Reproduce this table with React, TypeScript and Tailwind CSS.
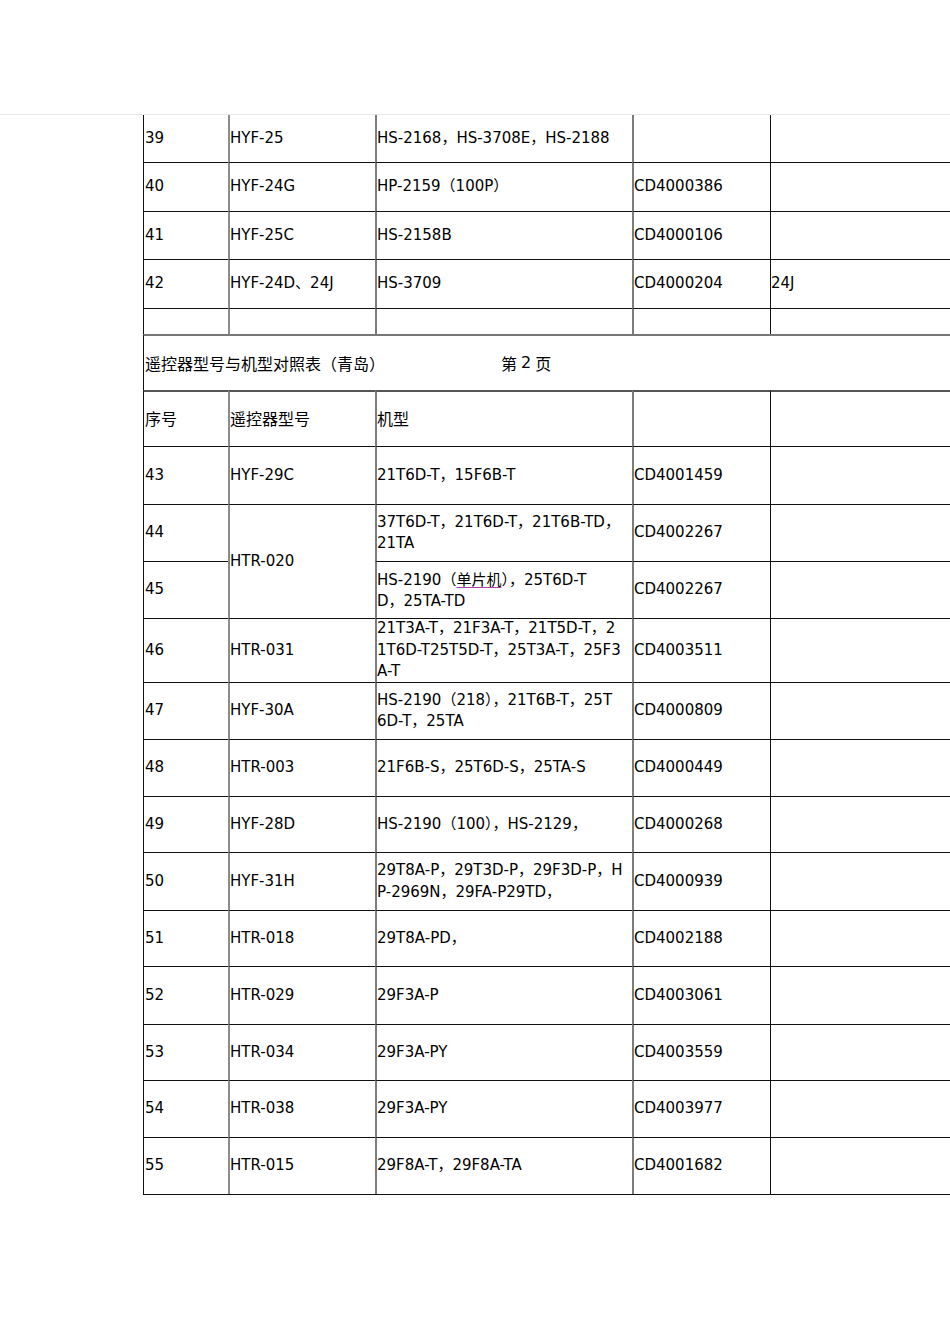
import React from "react";

const font = "font-['DejaVu_Sans','Noto_Sans_CJK_SC',sans-serif]";
const cjk = "font-['Noto_Sans_CJK_SC',sans-serif]";

// left border per column, matching the scanned sheet's grid lines
const colBorder = [
  "border-l border-l-[#111] pl-px",
  "border-l-2 border-l-[#8c8c8c]",
  "border-l-2 border-l-[#7d7d7d]",
  "border-l-2 border-l-[#7d7d7d]",
  "border-l border-l-[#111]",
];

function Cell({
  col,
  children,
  className = "",
}: {
  col: number;
  children?: React.ReactNode;
  className?: string;
}) {
  return (
    <div
      className={`flex items-center whitespace-nowrap border-t border-t-[#111] text-[15px] leading-[21.5px] ${colBorder[col]} ${className}`}
    >
      {children}
    </div>
  );
}

type Row = [string, React.ReactNode, React.ReactNode, string, string];

const top: Row[] = [
  ["39", "HYF-25", "HS-2168，HS-3708E，HS-2188", "", ""],
  ["40", "HYF-24G", "HP-2159（100P）", "CD4000386", ""],
  ["41", "HYF-25C", "HS-2158B", "CD4000106", ""],
  ["42", "HYF-24D、24J", "HS-3709", "CD4000204", "24J"],
  ["", "", "", "", ""],
];

const bottom: Row[] = [
  [
    "46",
    "HTR-031",
    <>
      21T3A-T，21F3A-T，21T5D-T，2
      <br />
      1T6D-T25T5D-T，25T3A-T，25F3
      <br />
      A-T
    </>,
    "CD4003511",
    "",
  ],
  [
    "47",
    "HYF-30A",
    <>
      HS-2190（218），21T6B-T，25T
      <br />
      6D-T，25TA
    </>,
    "CD4000809",
    "",
  ],
  ["48", "HTR-003", "21F6B-S，25T6D-S，25TA-S", "CD4000449", ""],
  ["49", "HYF-28D", "HS-2190（100），HS-2129，", "CD4000268", ""],
  [
    "50",
    "HYF-31H",
    <>
      29T8A-P，29T3D-P，29F3D-P，H
      <br />
      P-2969N，29FA-P29TD，
    </>,
    "CD4000939",
    "",
  ],
  ["51", "HTR-018", "29T8A-PD，", "CD4002188", ""],
  ["52", "HTR-029", "29F3A-P", "CD4003061", ""],
  ["53", "HTR-034", "29F3A-PY", "CD4003559", ""],
  ["54", "HTR-038", "29F3A-PY", "CD4003977", ""],
  ["55", "HTR-015", "29F8A-T，29F8A-TA", "CD4001682", ""],
];

function Cells({ row }: { row: Row }) {
  return (
    <>
      {row.map((c, i) => (
        <Cell key={i} col={i}>
          {c}
        </Cell>
      ))}
    </>
  );
}

export default function App() {
  return (
    <div className={`h-[1344px] w-[950px] overflow-hidden bg-white pt-[114px] text-black ${font}`}>
      <div className="border-t border-t-[#e8e8e8] pl-[143px]">
        <div className="grid w-[827px] grid-cols-[85px_147px_257px_138px_200px] grid-rows-[47px_49px_48px_49px_26px_56px_56px_58px_57px_57px_64px_57px_57px_56px_58px_56px_58px_56px_57px_57px] border-b border-b-[#111]">
          {top.map((r, i) =>
            i === 0 ? (
              r.map((c, j) => (
                <Cell key={j} col={j} className="border-t-0">
                  {c}
                </Cell>
              ))
            ) : (
              <Cells key={i} row={r} />
            )
          )}

          {/* page title row */}
          <div className="col-span-5 flex items-center border-l border-t-2 border-l-[#111] border-t-[#777] pl-px text-[16px]">
            <span className={`w-[356px] ${cjk}`}>遥控器型号与机型对照表（青岛）</span>
            <span className={cjk}>第</span>
            <span className="px-1">2</span>
            <span className={cjk}>页</span>
          </div>

          <Cell col={0} className={`border-t-2 border-t-[#555] text-[16px] ${cjk}`}>序号</Cell>
          <Cell col={1} className={`border-t-2 border-t-[#555] text-[16px] ${cjk}`}>遥控器型号</Cell>
          <Cell col={2} className={`border-t-2 border-t-[#555] text-[16px] ${cjk}`}>机型</Cell>
          <Cell col={3} className="border-t-2 border-t-[#555]" />
          <Cell col={4} className="border-t-2 border-t-[#555]" />

          <Cells row={["43", "HYF-29C", "21T6D-T，15F6B-T", "CD4001459", ""]} />

          <Cell col={0}>44</Cell>
          <Cell col={1} className="row-span-2">HTR-020</Cell>
          <Cell col={2} className="leading-[21px]">
            <span>
              37T6D-T，21T6D-T，21T6B-TD，
              <br />
              21TA
            </span>
          </Cell>
          <Cell col={3}>CD4002267</Cell>
          <Cell col={4} />

          <Cell col={0}>45</Cell>
          <Cell col={2} className="leading-[21px]">
            <span>
              HS-2190（
              <span className={`underline decoration-[#b040b0] underline-offset-2 ${cjk}`}>单片机</span>
              ），25T6D-T
              <br />
              D，25TA-TD
            </span>
          </Cell>
          <Cell col={3}>CD4002267</Cell>
          <Cell col={4} />

          {bottom.map((r, i) => (
            <Cells key={i} row={r} />
          ))}
        </div>
      </div>
    </div>
  );
}
